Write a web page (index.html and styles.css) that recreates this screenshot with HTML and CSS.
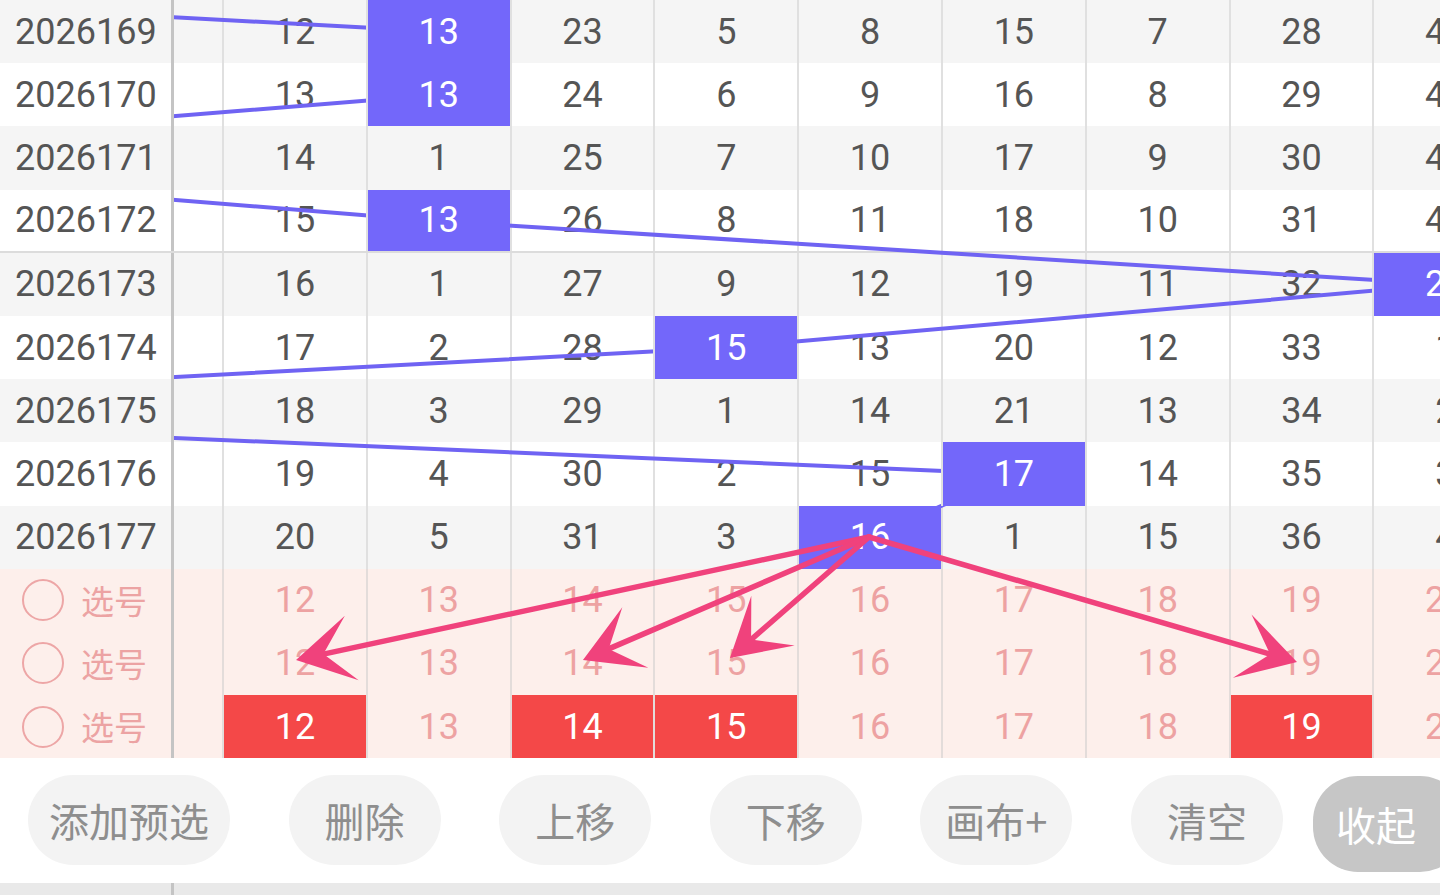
FILE: index.html
```html
<!DOCTYPE html>
<html lang="zh-CN">
<head>
<meta charset="utf-8">
<title>走势图</title>
<link rel="stylesheet" href="styles.css">
</head>
<body>
<div class="page">
  <div class="chart">
    <div class="row row--shade">
      <div class="period">2026169</div><div class="gutter"></div>
      <div class="cell">12</div><div class="cell cell--hit">13</div><div class="cell">23</div><div class="cell">5</div><div class="cell">8</div><div class="cell">15</div><div class="cell">7</div><div class="cell">28</div><div class="cell">40</div>
    </div>
    <div class="row">
      <div class="period">2026170</div><div class="gutter"></div>
      <div class="cell">13</div><div class="cell cell--hit">13</div><div class="cell">24</div><div class="cell">6</div><div class="cell">9</div><div class="cell">16</div><div class="cell">8</div><div class="cell">29</div><div class="cell">41</div>
    </div>
    <div class="row row--shade">
      <div class="period">2026171</div><div class="gutter"></div>
      <div class="cell">14</div><div class="cell">1</div><div class="cell">25</div><div class="cell">7</div><div class="cell">10</div><div class="cell">17</div><div class="cell">9</div><div class="cell">30</div><div class="cell">42</div>
    </div>
    <div class="row row--group-end">
      <div class="period">2026172</div><div class="gutter"></div>
      <div class="cell">15</div><div class="cell cell--hit">13</div><div class="cell">26</div><div class="cell">8</div><div class="cell">11</div><div class="cell">18</div><div class="cell">10</div><div class="cell">31</div><div class="cell">43</div>
    </div>
    <div class="row row--shade">
      <div class="period">2026173</div><div class="gutter"></div>
      <div class="cell">16</div><div class="cell">1</div><div class="cell">27</div><div class="cell">9</div><div class="cell">12</div><div class="cell">19</div><div class="cell">11</div><div class="cell">32</div><div class="cell cell--hit">20</div>
    </div>
    <div class="row">
      <div class="period">2026174</div><div class="gutter"></div>
      <div class="cell">17</div><div class="cell">2</div><div class="cell">28</div><div class="cell cell--hit">15</div><div class="cell">13</div><div class="cell">20</div><div class="cell">12</div><div class="cell">33</div><div class="cell">1</div>
    </div>
    <div class="row row--shade">
      <div class="period">2026175</div><div class="gutter"></div>
      <div class="cell">18</div><div class="cell">3</div><div class="cell">29</div><div class="cell">1</div><div class="cell">14</div><div class="cell">21</div><div class="cell">13</div><div class="cell">34</div><div class="cell">2</div>
    </div>
    <div class="row">
      <div class="period">2026176</div><div class="gutter"></div>
      <div class="cell">19</div><div class="cell">4</div><div class="cell">30</div><div class="cell">2</div><div class="cell">15</div><div class="cell cell--hit">17</div><div class="cell">14</div><div class="cell">35</div><div class="cell">3</div>
    </div>
    <div class="row row--shade">
      <div class="period">2026177</div><div class="gutter"></div>
      <div class="cell">20</div><div class="cell">5</div><div class="cell">31</div><div class="cell">3</div><div class="cell cell--hit">16</div><div class="cell">1</div><div class="cell">15</div><div class="cell">36</div><div class="cell">4</div>
    </div>

    <div class="row row--pick">
      <div class="period period--pick"><span class="radio"></span><span class="pick-label">选号</span></div><div class="gutter"></div>
      <div class="cell">12</div><div class="cell">13</div><div class="cell">14</div><div class="cell">15</div><div class="cell">16</div><div class="cell">17</div><div class="cell">18</div><div class="cell">19</div><div class="cell">20</div>
    </div>
    <div class="row row--pick">
      <div class="period period--pick"><span class="radio"></span><span class="pick-label">选号</span></div><div class="gutter"></div>
      <div class="cell">12</div><div class="cell">13</div><div class="cell">14</div><div class="cell">15</div><div class="cell">16</div><div class="cell">17</div><div class="cell">18</div><div class="cell">19</div><div class="cell">20</div>
    </div>
    <div class="row row--pick">
      <div class="period period--pick"><span class="radio"></span><span class="pick-label">选号</span></div><div class="gutter"></div>
      <div class="cell cell--chosen">12</div><div class="cell">13</div><div class="cell cell--chosen">14</div><div class="cell cell--chosen">15</div><div class="cell">16</div><div class="cell">17</div><div class="cell">18</div><div class="cell cell--chosen">19</div><div class="cell">20</div>
    </div>

    <!-- trend line joining the drawn number of each period -->
    <svg class="trend" width="1440" height="759" viewBox="0 0 1440 759">
      <polyline points="-721,-31.6 438.7,31.6 438.7,94.8 -343,158 438.7,221.2 1445.3,284.4 726.3,347.6 -458,410.8 1013.9,474 870.1,537.2"
        fill="none" stroke="#6f63f3" stroke-width="4" stroke-linejoin="round"/>
    </svg>

    <!-- hand-drawn arrows on the canvas layer -->
    <svg class="sketch" width="1440" height="759" viewBox="0 0 1440 759">
      <defs>
        <marker id="dart" markerUnits="userSpaceOnUse" markerWidth="80" markerHeight="80"
          refX="-28" refY="0" orient="auto" overflow="visible">
          <path d="M0 0 L-57 -33 L-28 0 L-57 33 Z" fill="#f0427c"/>
        </marker>
      </defs>
      <g stroke="#f0427c" stroke-width="5.5" stroke-linecap="round" fill="none">
        <line x1="869" y1="537" x2="323.4" y2="654.1" marker-end="url(#dart)"/>
        <line x1="869" y1="537" x2="608.7" y2="648.9" marker-end="url(#dart)"/>
        <line x1="869" y1="537" x2="751.1" y2="639.6" marker-end="url(#dart)"/>
        <line x1="869" y1="537" x2="1270.1" y2="654.2" marker-end="url(#dart)"/>
      </g>
    </svg>
  </div>

  <div class="toolbar">
    <button class="btn btn--wide">添加预选</button>
    <button class="btn">删除</button>
    <button class="btn">上移</button>
    <button class="btn">下移</button>
    <button class="btn">画布+</button>
    <button class="btn">清空</button>
    <button class="btn btn--fold">收起</button>
  </div>

  <div class="next">
    <div class="next__head"></div>
  </div>
</div>
</body>
</html>
```

FILE: styles.css
```css
* {
  box-sizing: border-box;
  margin: 0;
  padding: 0;
}

html,
body {
  width: 1440px;
  height: 895px;
  overflow: hidden;
  background: #fff;
}

body {
  font-family: Roboto, "Noto Sans CJK SC", sans-serif;
}

.page {
  width: 1440px;
  height: 895px;
  overflow: hidden;
  display: flex;
  flex-direction: column;
}

/* ---------- trend chart ---------- */

.chart {
  position: relative;
  isolation: isolate;
  flex: none;
  width: 1440px;
  overflow: hidden;
}

.row {
  display: flex;
  height: 63.2px;
  background: #fff;
}

.row--shade {
  background: #f5f5f5;
}

.row--group-end {
  border-bottom: 2px solid #dcdcdc;
}

.row--pick {
  background: #fdefeb;
}

.period {
  flex: none;
  width: 174px;
  display: flex;
  align-items: center;
  padding-left: 15px;
  border-right: 3px solid #c4c4c4;
  background: inherit;
  font-size: 36px;
  color: #555;
  z-index: 4;
}

.period--pick {
  padding-left: 22px;
  gap: 17px;
}

.radio {
  width: 42px;
  height: 42px;
  border: 2px solid #eda6a6;
  border-radius: 50%;
  flex: none;
}

.pick-label {
  font-family: "Noto Sans CJK SC", sans-serif;
  font-size: 33px;
  color: #eca3a3;
  line-height: 1;
}

.gutter {
  flex: none;
  width: 48px;
}

.cell {
  flex: none;
  width: 143.8px;
  display: flex;
  align-items: center;
  justify-content: center;
  border-left: 2px solid #e0e0e0;
  font-size: 36px;
  color: #555;
}

.row--pick .cell {
  color: #eda2a2;
  border-left-color: #e3dcda;
}

.cell--hit {
  background: #7367fa;
  color: #fff;
  z-index: 2;
}

.row--pick .cell--chosen {
  background: #f44848;
  color: #fff;
}

.trend,
.sketch {
  position: absolute;
  top: 0;
  left: 0;
  pointer-events: none;
}

.trend {
  z-index: 1;
}

.sketch {
  z-index: 3;
}

/* ---------- action bar ---------- */

.toolbar {
  flex: none;
  height: 124.6px;
  display: flex;
  align-items: center;
  gap: 58.6px;
  padding: 0 0 2px 28px;
  background: #fff;
  overflow: hidden;
}

.btn {
  flex: none;
  min-width: 152px;
  height: 90px;
  padding: 0 21px;
  border: none;
  border-radius: 45px;
  background: #f3f3f3;
  color: #8e8e8e;
  font-family: "Noto Sans CJK SC", sans-serif;
  font-size: 40px;
  line-height: 1;
}

.btn--fold {
  margin-left: -28.6px;
  height: 96px;
  margin-top: 8px;
  padding: 0 0 0 23px;
  text-align: left;
  background: #c6c6c6;
  color: #fff;
}

/* ---------- next section edge ---------- */

.next {
  flex: none;
  height: 12px;
  display: flex;
  background: #e9e9e9;
}

.next__head {
  width: 174px;
  border-right: 3px solid #c4c4c4;
}
```
